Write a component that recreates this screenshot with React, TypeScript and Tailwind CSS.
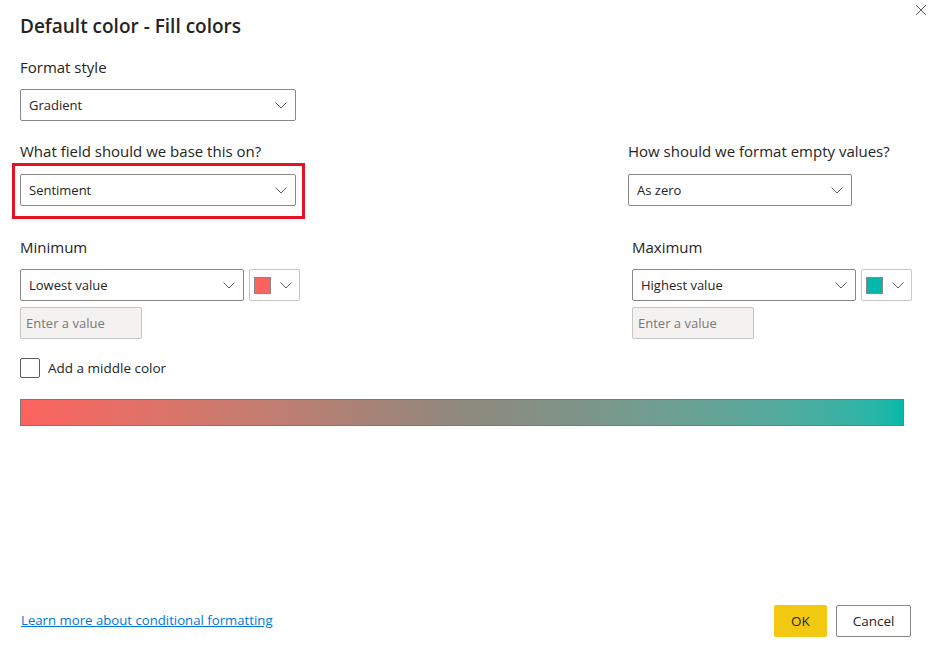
import React from 'react';

const Chevron = () => (
  <svg width="12" height="7" viewBox="0 0 12 7" fill="none">
    <path d="M0.5 0.5L6 6L11.5 0.5" stroke="#605e5c" strokeWidth="1" />
  </svg>
);

// plain select lookalike
const Dropdown = ({ value, width }: { value: string; width: string }) => (
  <div
    className={`${width} h-[32px] border border-[#8a8886] rounded-[2px] flex items-center justify-between pl-[8px] pr-[8px] text-[13px] text-[#252423] bg-white`}
  >
    <span className="pt-[2px]">{value}</span>
    <Chevron />
  </div>
);

const ColorPicker = ({ color }: { color: string }) => (
  <div className="w-[51px] h-[32px] border border-[#c8c6c4] rounded-[2px] flex items-center justify-between pl-[4px] pr-[7px]">
    <div className="w-[17px] h-[17px] border border-[#8a8886]" style={{ backgroundColor: color }} />
    <Chevron />
  </div>
);

const ValueInput = () => (
  <div className="w-[122px] h-[32px] mt-[6px] border border-[#c8c6c4] rounded-[2px] bg-[#f3f2f1] flex items-center pl-[5px] pt-[2px] text-[13px] text-[#797775]">
    Enter a value
  </div>
);

export default function App() {
  return (
    <div
      className="relative w-[930px] h-[648px] bg-white text-[#252423] flex flex-col px-[20px]"
      style={{ fontFamily: '"Segoe UI", "Open Sans", "Noto Sans", sans-serif' }}
    >
      {/* close */}
      <button className="absolute top-[3px] right-[2px] w-[14px] h-[14px] flex items-center justify-center">
        <svg width="12" height="12" viewBox="0 0 12 12">
          <path d="M1 1L11 11M11 1L1 11" stroke="#605e5c" strokeWidth="1" />
        </svg>
      </button>

      <h1 className="mt-[13px] text-[19px] leading-[26px] font-semibold text-[#252423]">Default color - Fill colors</h1>

      <div className="mt-[18px] text-[15px] leading-[20px]">Format style</div>
      <div className="mt-[12px]">
        <Dropdown value="Gradient" width="w-[276px]" />
      </div>

      <div className="mt-[20px] flex">
        <div className="w-[608px] shrink-0">
          <div className="text-[15px] leading-[20px]">What field should we base this on?</div>
          <div className="relative mt-[13px] w-[276px]">
            <Dropdown value="Sentiment" width="w-[276px]" />
            <div className="absolute left-[-8px] top-[-11px] w-[293px] h-[56px] border-[3px] border-[#e81123] pointer-events-none" />
          </div>
        </div>
        <div>
          <div className="text-[15px] leading-[20px]">How should we format empty values?</div>
          <div className="mt-[13px]">
            <Dropdown value="As zero" width="w-[224px]" />
          </div>
        </div>
      </div>

      <div className="mt-[31px] flex">
        <div className="w-[612px] shrink-0">
          <div className="text-[15px] leading-[20px]">Minimum</div>
          <div className="mt-[12px] flex gap-[5px]">
            <Dropdown value="Lowest value" width="w-[224px]" />
            <ColorPicker color="#fd625e" />
          </div>
          <ValueInput />
        </div>
        <div className="shrink-0">
          <div className="text-[15px] leading-[20px]">Maximum</div>
          <div className="mt-[12px] flex gap-[5px]">
            <Dropdown value="Highest value" width="w-[224px]" />
            <ColorPicker color="#01b8aa" />
          </div>
          <ValueInput />
        </div>
      </div>

      <label className="mt-[19px] flex items-center gap-[8px] text-[13.5px]">
        <span className="w-[20px] h-[20px] border border-[#605e5c] rounded-[2px] bg-white" />
        Add a middle color
      </label>

      <div className="mt-[21px] w-[884px] h-[27px] border border-[#7a7a7a] bg-gradient-to-r from-[#fd625e] via-[#8e887d] to-[#01b8aa]" />

      <div className="mt-auto mb-[11px] flex items-center justify-between">
        <a className="ml-[1px] text-[13.2px] text-[#0078d4] underline">Learn more about conditional formatting</a>
        <div className="flex gap-[9px] mr-[-1px]">
          <button className="w-[53px] h-[32px] rounded-[2px] bg-[#f2c811] text-[13.5px] text-[#252423]">OK</button>
          <button className="w-[75px] h-[32px] rounded-[2px] border border-[#8a8886] bg-white text-[13.5px] text-[#252423]">Cancel</button>
        </div>
      </div>
    </div>
  );
}
